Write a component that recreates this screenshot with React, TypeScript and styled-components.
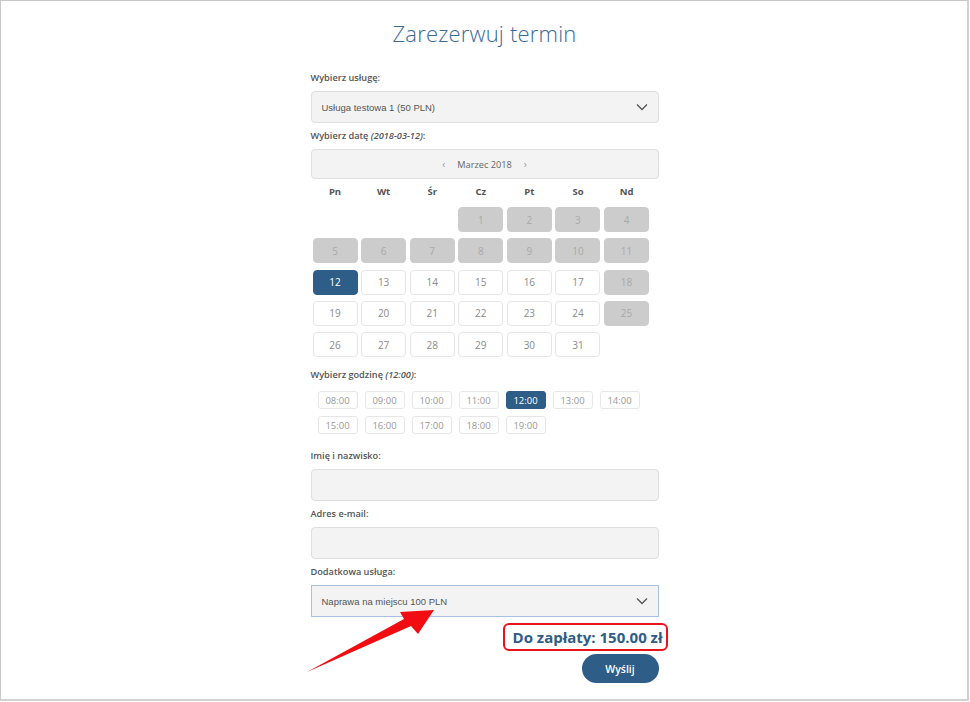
import React from "react";
import styled, { createGlobalStyle } from "styled-components";

const GlobalStyle = createGlobalStyle`
  body {
    margin: 0;
    background: #fff;
    font-family: "Open Sans", "Liberation Sans", sans-serif;
  }
`;

const Frame = styled.div`
  position: relative;
  box-sizing: border-box;
  width: 969px;
  height: 701px;
  border: 1px solid #c9c9c9;
  border-right: 2px solid #d2d2d2;
  border-bottom: 2px solid #d2d2d2;
  overflow: hidden;
`;

const Form = styled.div`
  width: 348px;
  margin: 0 auto;
  padding-left: 1px;
  display: flex;
  flex-direction: column;
`;

const Title = styled.h1`
  margin: 17px 0 22px;
  font-size: 22px;
  line-height: 30px;
  font-weight: 300;
  color: #3b6a95;
  text-align: center;
  letter-spacing: 0.2px;
`;

const Label = styled.div<{ $gap?: number }>`
  font-size: 9.2px;
  line-height: 16px;
  font-weight: 600;
  color: #555;
  margin-top: ${(p) => p.$gap ?? 0}px;
  margin-bottom: 5px;
  em {
    font-style: italic;
  }
`;

const SelectBox = styled.div<{ $focus?: boolean }>`
  box-sizing: border-box;
  height: 32px;
  display: flex;
  align-items: center;
  justify-content: space-between;
  padding: 0 10px 0 10px;
  background: #f3f3f3;
  border: 1px solid ${(p) => (p.$focus ? "#a9c1e0" : "#dedede")};
  border-radius: ${(p) => (p.$focus ? 0 : 4)}px;
  font-family: "Liberation Sans", Arial, sans-serif;
  font-size: 9.5px;
  color: #555;
`;

const TextInput = styled.div`
  box-sizing: border-box;
  height: 32px;
  background: #f3f3f3;
  border: 1px solid #dedede;
  border-radius: 4px;
`;

const MonthBar = styled.div`
  box-sizing: border-box;
  height: 30px;
  display: flex;
  align-items: center;
  justify-content: center;
  gap: 12px;
  background: #f3f3f3;
  border: 1px solid #dedede;
  border-radius: 4px;
  font-size: 9.2px;
  color: #666;
`;

const Nav = styled.span`
  color: #999;
  font-size: 10px;
`;

const CalGrid = styled.div<{ $head?: boolean }>`
  display: grid;
  grid-template-columns: repeat(7, 45px);
  column-gap: 3.6px;
  row-gap: 6.3px;
  grid-auto-rows: ${(p) => (p.$head ? "16px" : "25px")};
  padding-left: 2px;
  margin-top: ${(p) => (p.$head ? 5 : 7)}px;
`;

const WeekDay = styled.div`
  text-align: center;
  font-size: 9.5px;
  line-height: 16px;
  font-weight: 700;
  color: #555;
`;

type DayState = "off" | "on" | "sel" | "empty";

const Day = styled.div<{ $state: DayState }>`
  box-sizing: border-box;
  display: flex;
  align-items: center;
  justify-content: center;
  border-radius: 4px;
  font-size: 10px;
  visibility: ${(p) => (p.$state === "empty" ? "hidden" : "visible")};
  background: ${(p) =>
    p.$state === "off" ? "#cccccc" : p.$state === "sel" ? "#2e5d87" : "#fff"};
  border: 1px solid
    ${(p) => (p.$state === "off" ? "#cccccc" : p.$state === "sel" ? "#2e5d87" : "#e6e6e6")};
  color: ${(p) => (p.$state === "off" ? "#a9a9a9" : p.$state === "sel" ? "#fff" : "#8a8a8a")};
`;

const Hours = styled.div`
  display: flex;
  flex-wrap: wrap;
  width: 340px;
  gap: 7px 7px;
  padding-left: 7px;
  margin-top: 3px;
`;

const Hour = styled.div<{ $sel?: boolean }>`
  box-sizing: border-box;
  width: 40px;
  height: 18px;
  display: flex;
  align-items: center;
  justify-content: center;
  border-radius: 3px;
  font-size: 9.5px;
  background: ${(p) => (p.$sel ? "#2e5d87" : "#fff")};
  border: 1px solid ${(p) => (p.$sel ? "#2e5d87" : "#e6e6e6")};
  color: ${(p) => (p.$sel ? "#fff" : "#999")};
`;

const PriceRow = styled.div`
  display: flex;
  justify-content: flex-end;
  margin-top: 10px;
  margin-right: -4px;
`;

const Price = styled.div`
  position: relative;
  font-size: 15px;
  line-height: 20px;
  font-weight: 700;
  color: #2e5d87;

  &::after {
    content: "";
    position: absolute;
    left: -10px;
    right: -5px;
    top: -4px;
    bottom: -4px;
    border: 2px solid #e8141b;
    border-radius: 6px;
  }
`;

const SendRow = styled.div`
  display: flex;
  justify-content: flex-end;
  margin-top: 7px;
`;

const SendButton = styled.button`
  width: 77px;
  height: 29px;
  border: none;
  border-radius: 15px;
  background: #2e5d87;
  color: #fff;
  font-family: "Open Sans", sans-serif;
  font-size: 10.5px;
  font-weight: 600;
  cursor: pointer;
`;

const Overlay = styled.svg`
  position: absolute;
  left: -1px;
  top: -1px;
  pointer-events: none;
`;

const Chevron = () => (
  <svg width="12" height="8" viewBox="0 0 12 8">
    <polyline points="1,1.5 6,6.5 11,1.5" fill="none" stroke="#555" strokeWidth="1.3" />
  </svg>
);

const weekDays = ["Pn", "Wt", "Śr", "Cz", "Pt", "So", "Nd"];

const days: { n: number | null; s: DayState }[] = [
  { n: null, s: "empty" },
  { n: null, s: "empty" },
  { n: null, s: "empty" },
  ...Array.from({ length: 31 }, (_, i) => {
    const n = i + 1;
    let s: DayState = "on";
    if (n <= 11 || n === 18 || n === 25) s = "off";
    if (n === 12) s = "sel";
    return { n, s };
  }),
];

const hours = ["08:00", "09:00", "10:00", "11:00", "12:00", "13:00", "14:00", "15:00", "16:00", "17:00", "18:00", "19:00"];

export default function App() {
  return (
    <>
      <GlobalStyle />
      <Frame>
        <Form>
          <Title>Zarezerwuj termin</Title>

          <Label>Wybierz usługę:</Label>
          <SelectBox>
            <span>Usługa testowa 1 (50 PLN)</span>
            <Chevron />
          </SelectBox>

          <Label $gap={5}>
            Wybierz datę <em>(2018-03-12)</em>:
          </Label>
          <MonthBar>
            <Nav>‹</Nav>
            <span>Marzec 2018</span>
            <Nav>›</Nav>
          </MonthBar>

          <CalGrid $head>
            {weekDays.map((d) => (
              <WeekDay key={d}>{d}</WeekDay>
            ))}
          </CalGrid>
          <CalGrid>
            {days.map((d, i) => (
              <Day key={i} $state={d.s}>
                {d.n}
              </Day>
            ))}
          </CalGrid>

          <Label $gap={10}>
            Wybierz godzinę <em>(12:00)</em>:
          </Label>
          <Hours>
            {hours.map((h) => (
              <Hour key={h} $sel={h === "12:00"}>
                {h}
              </Hour>
            ))}
          </Hours>

          <Label $gap={14}>Imię i nazwisko:</Label>
          <TextInput />

          <Label $gap={5}>Adres e-mail:</Label>
          <TextInput />

          <Label $gap={5}>Dodatkowa usługa:</Label>
          <SelectBox $focus>
            <span>Naprawa na miejscu 100 PLN</span>
            <Chevron />
          </SelectBox>

          <PriceRow>
            <Price>Do zapłaty: 150.00 zł</Price>
          </PriceRow>
          <SendRow>
            <SendButton>Wyślij</SendButton>
          </SendRow>
        </Form>

        <Overlay width="970" height="702" viewBox="0 0 970 702">
          <polygon
            points="307,672 404,619 400,612 434,610 418,634 411,626"
            fill="#f20d12"
          />
        </Overlay>
      </Frame>
    </>
  );
}
